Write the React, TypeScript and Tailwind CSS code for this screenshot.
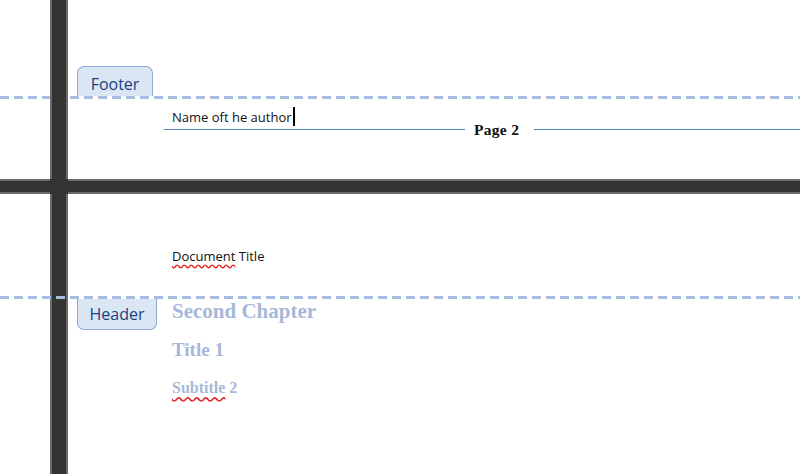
export default function App() {
  const dashed =
    "h-[3px] w-full bg-[repeating-linear-gradient(90deg,#a6bde0_0_9px,transparent_9px_14px)]";
  return (
    <div className="grid h-[474px] w-[800px] grid-cols-[50px_18px_1fr] grid-rows-[179px_15px_1fr] overflow-hidden bg-white font-['Open_Sans',sans-serif]">
      {/* previous page, footer area */}
      <div className="col-span-3 col-start-1 row-start-1 flex flex-col pt-[66px]">
        <div className="ml-[77px] flex h-[30px] w-[76px] items-center justify-center rounded-t-[7px] border border-b-0 border-[#8eaad6] bg-[#dbe6f5] pt-[4px] text-[16px] text-[#213f7d]">
          Footer
        </div>
        <div className={dashed} />
        <div className="ml-[164px] mt-[4px] flex items-end">
          <div className="w-[301px] border-b border-[#4f81bd] pb-[1px] pl-[8px]">
            <span className="text-[13px] leading-[18px] text-[#111]">Name oft he author</span>
            <span className="ml-[1px] inline-block h-[19px] w-[2px] translate-y-[4px] bg-black" />
          </div>
          <div className="mb-[-8px] ml-[9px] font-['Liberation_Serif',serif] text-[15.5px] font-bold leading-[16px] tracking-[0.3px] text-[#111]">
            Page 2
          </div>
          <div className="ml-[15px] h-px flex-1 bg-[#4f81bd]" />
        </div>
      </div>

      {/* page gap bars */}
      <div className="col-start-2 row-span-3 row-start-1 border-x-2 border-[#6a6a6a] bg-[#333]" />
      <div className="col-span-3 col-start-1 row-start-2 border-y-2 border-[#6a6a6a] bg-[#333]" />
      <div className="col-start-2 row-start-2 bg-[#333]" />

      {/* next page, header area */}
      <div className="col-span-3 col-start-1 row-start-3 flex flex-col pt-[53px]">
        <div className="ml-[172px] text-[13px] leading-[18px] text-[#111]">
          <span className="underline decoration-[#e02020] decoration-wavy underline-offset-[3px]">Document</span>{" "}
          Title
        </div>
        <div className="relative mt-[31px]">
          <div className={dashed} />
          <div className="absolute left-[77px] top-[3px] flex h-[31px] w-[80px] items-center justify-center rounded-b-[7px] border border-t-0 border-[#8eaad6] bg-[#dbe6f5] text-[16px] text-[#213f7d]">
            Header
          </div>
        </div>
        <div className="ml-[172px] flex flex-col font-['Liberation_Serif',serif] text-[#a6b8d9]">
          <div className="text-[21px] font-bold leading-[24px]">Second Chapter</div>
          <div className="mt-[15px] text-[19px] font-bold leading-[24px]">Title 1</div>
          <div className="mt-[15px] text-[16px] font-bold leading-[22px]">
            <span className="underline decoration-[#e02020] decoration-wavy underline-offset-[3px]">Subtitle</span> 2
          </div>
        </div>
      </div>
    </div>
  );
}
